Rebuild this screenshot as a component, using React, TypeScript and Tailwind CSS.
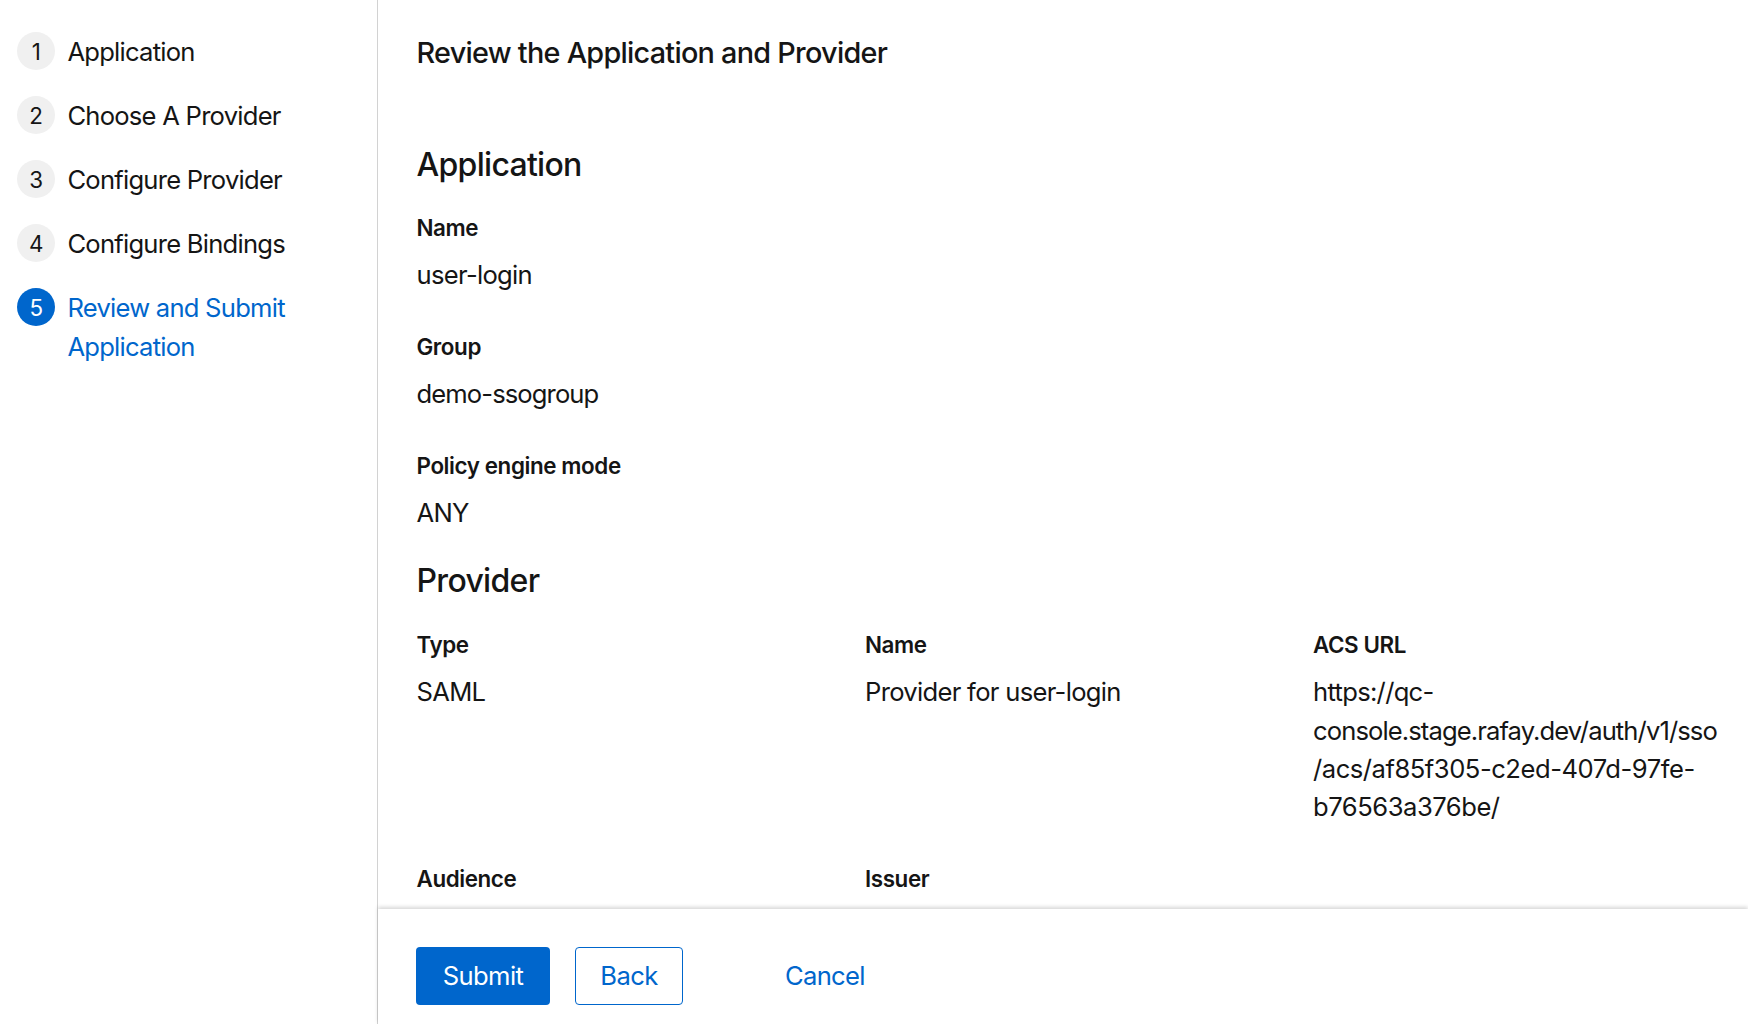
import React from 'react';

const STEPS = ['Application', 'Choose A Provider', 'Configure Provider', 'Configure Bindings'];

function Field({ label, children, className = '' }: { label: string; children: React.ReactNode; className?: string }) {
  return (
    <div className={className}>
      <div className="text-[22.4px] leading-[36px] font-semibold text-[#151515] tracking-[-0.4px]">{label}</div>
      <div className="mt-[10px] text-[25.6px] leading-[38.4px] text-[#151515] tracking-[-0.7px]">{children}</div>
    </div>
  );
}

export default function App() {
  return (
    <div className="flex h-screen overflow-hidden bg-white font-['Inter',sans-serif]">
      {/* Steps */}
      <nav className="w-[378px] shrink-0 border-r border-[#d2d2d2] pl-[17px] pt-[32px]">
        <ol className="flex flex-col gap-[24.6px]">
          {STEPS.map((s, i) => (
            <li key={s} className="flex gap-[12px]">
              <span className="grid h-[38.4px] w-[38.4px] place-items-center rounded-full bg-[#f0f0f0] pt-[1px] text-[22.4px] text-[#151515]">{i + 1}</span>
              <span className="pt-[1px] text-[25.6px] leading-[38.4px] text-[#151515] tracking-[-0.76px]">{s}</span>
            </li>
          ))}
          <li className="flex gap-[12px]">
            <span className="grid h-[38.4px] w-[38.4px] shrink-0 place-items-center rounded-full bg-[#06c] pt-[1px] text-[22.4px] text-white">5</span>
            <span className="text-[25.6px] leading-[39px] text-[#06c] tracking-[-0.76px]">Review and Submit<br />Application</span>
          </li>
        </ol>
      </nav>

      <main className="flex min-w-0 flex-1 flex-col">
        <div className="min-h-0 flex-1 overflow-hidden pl-[38.5px] pt-[33px]">
          <h1 className="text-[28.8px] leading-[40px] font-medium text-[#151515] tracking-[-0.73px]">Review the Application and Provider</h1>

          <h2 className="mt-[68px] text-[32px] leading-[48px] font-medium text-[#151515] tracking-[-0.7px]">Application</h2>
          <Field label="Name" className="mt-[21px]">user-login</Field>
          <Field label="Group" className="mt-[35px]"><span className="tracking-[-0.9px]">demo-ssogroup</span></Field>
          <Field label="Policy engine mode" className="mt-[34px]">ANY</Field>

          <h2 className="mt-[25px] text-[32px] leading-[48px] font-medium text-[#151515] tracking-[-0.7px]">Provider</h2>
          <div className="mt-[22px] grid grid-cols-[448.5px_448px_1fr]">
            <Field label="Type">SAML</Field>
            <Field label="Name">Provider for user-login</Field>
            <Field label="ACS URL">
              https://qc-<br />
              <span className="tracking-[-0.9px]">console.stage.rafay.dev/auth/v1/sso</span><br />
              <span className="tracking-[-0.48px]">/acs/af85f305-c2ed-407d-97fe-</span><br />
              <span className="tracking-[-0.48px]">b76563a376be/</span>
            </Field>
            <Field label="Audience" className="mt-[34px]">&nbsp;</Field>
            <Field label="Issuer" className="mt-[34px]">&nbsp;</Field>
          </div>
        </div>

        <footer className="flex h-[115px] shrink-0 items-start gap-[25px] bg-white pl-[38px] pt-[38px] shadow-[0_-2px_4px_rgba(3,3,3,0.16)]">
          <button className="h-[58px] w-[134px] rounded-[4px] bg-[#06c] text-[25.6px] text-white tracking-[-0.6px]">Submit</button>
          <button className="h-[58px] w-[108px] rounded-[4px] border border-[#06c] text-[25.6px] text-[#06c] tracking-[-0.6px]">Back</button>
          <button className="ml-[77px] h-[58px] text-[25.6px] text-[#06c] tracking-[-0.7px]">Cancel</button>
        </footer>
      </main>
    </div>
  );
}
